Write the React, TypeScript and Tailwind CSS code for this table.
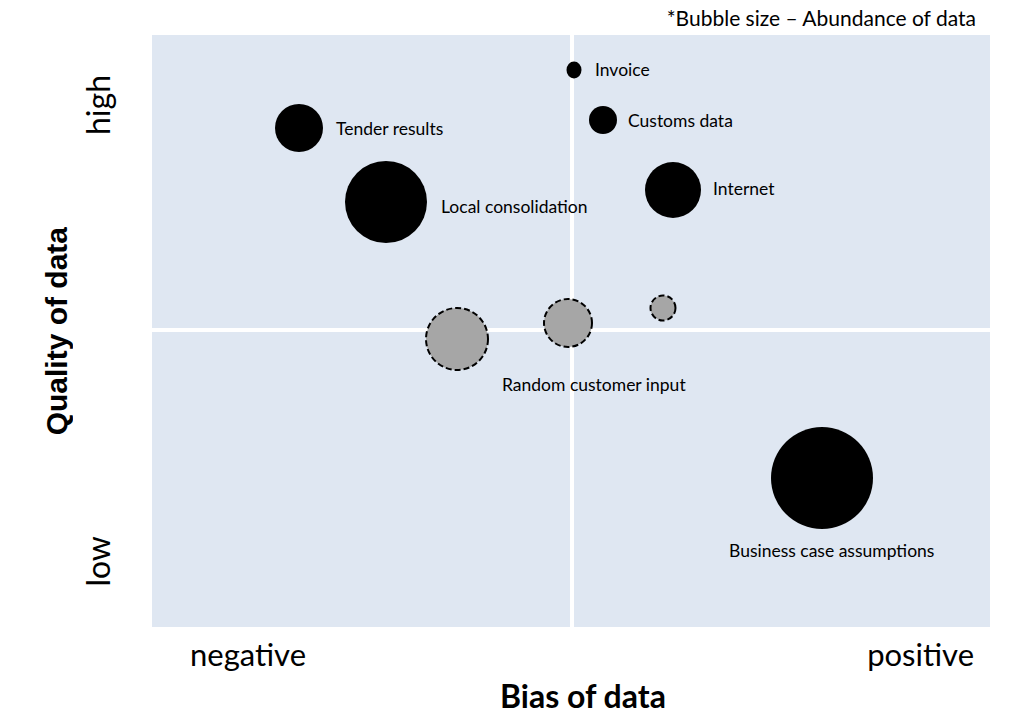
const calibri = "font-['Lato','Noto_Sans',sans-serif]";

type Bubble = { cx: number; cy: number; r: number; ry?: number; dashed?: boolean };

const bubbles: Bubble[] = [
  { cx: 422, cy: 35, r: 7.5, ry: 8.5 },
  { cx: 451, cy: 85, r: 14 },
  { cx: 147, cy: 93, r: 24 },
  { cx: 234, cy: 167, r: 41 },
  { cx: 521, cy: 155, r: 28 },
  { cx: 305, cy: 304, r: 31, dashed: true },
  { cx: 416, cy: 288, r: 24, dashed: true },
  { cx: 511, cy: 273, r: 12.5, dashed: true },
  { cx: 670, cy: 443, r: 51 },
];

const labels = [
  { text: "Invoice", x: 443, y: 35 },
  { text: "Customs data", x: 476, y: 86 },
  { text: "Tender results", x: 184, y: 94 },
  { text: "Local consolidation", x: 289, y: 172 },
  { text: "Internet", x: 561, y: 154 },
  { text: "Random customer input", x: 350, y: 350 },
  { text: "Business case assumptions", x: 577, y: 516 },
];

function Plot() {
  return (
    <div className="relative w-[838px] h-[592px]">
      <div className="grid grid-cols-[418px_416px] grid-rows-[293px_295px] gap-x-[4px] gap-y-[4px] w-full h-full bg-white">
        <div className="bg-[#dfe7f2]" />
        <div className="bg-[#dfe7f2]" />
        <div className="bg-[#dfe7f2]" />
        <div className="bg-[#dfe7f2]" />
      </div>
      <svg className="absolute inset-0" width="838" height="592" viewBox="0 0 838 592">
        {bubbles.map((b, i) => (
          <ellipse
            key={i}
            cx={b.cx}
            cy={b.cy}
            rx={b.r}
            ry={b.ry ?? b.r}
            fill={b.dashed ? "#a6a6a6" : "#000"}
            stroke={b.dashed ? "#000" : "none"}
            strokeWidth={b.dashed ? 2 : 0}
            strokeDasharray={b.dashed ? "6 3" : undefined}
          />
        ))}
      </svg>
      {labels.map((l) => (
        <span
          key={l.text}
          className={`absolute ${calibri} text-[17.5px] leading-none text-black whitespace-nowrap -translate-y-1/2`}
          style={{ left: l.x, top: l.y }}
        >
          {l.text}
        </span>
      ))}
    </div>
  );
}

export default function App() {
  return (
    <div className="w-[1024px] h-[728px] bg-white text-black flex flex-col overflow-hidden">
      <div className={`h-[35px] flex items-center justify-end pr-[48px] ${calibri} text-[21px]`}>
        *Bubble size – Abundance of data
      </div>
      <div className="flex">
        <div className="w-[152px] h-[592px] flex">
          <div className="w-[72px] flex items-center justify-end">
            <span className="[writing-mode:vertical-rl] rotate-180 font-['Liberation_Sans',Arial,sans-serif] font-bold text-[30px] leading-none">
              Quality of data
            </span>
          </div>
          <div className="flex-1 flex flex-col items-center justify-between pt-[40px] pb-[40px] pr-[28px]">
            <span className={`[writing-mode:vertical-rl] rotate-180 ${calibri} text-[32px] leading-none`}>high</span>
            <span className={`[writing-mode:vertical-rl] rotate-180 ${calibri} text-[32px] leading-none`}>low</span>
          </div>
        </div>
        <Plot />
      </div>
      <div className={`flex justify-between pl-[190px] pr-[50px] pt-[12px] ${calibri} text-[31px] leading-none`}>
        <span>negative</span>
        <span>positive</span>
      </div>
      <div className={`pl-[500px] pt-[10px] ${calibri} font-bold text-[32px] leading-none`}>Bias of data</div>
    </div>
  );
}
